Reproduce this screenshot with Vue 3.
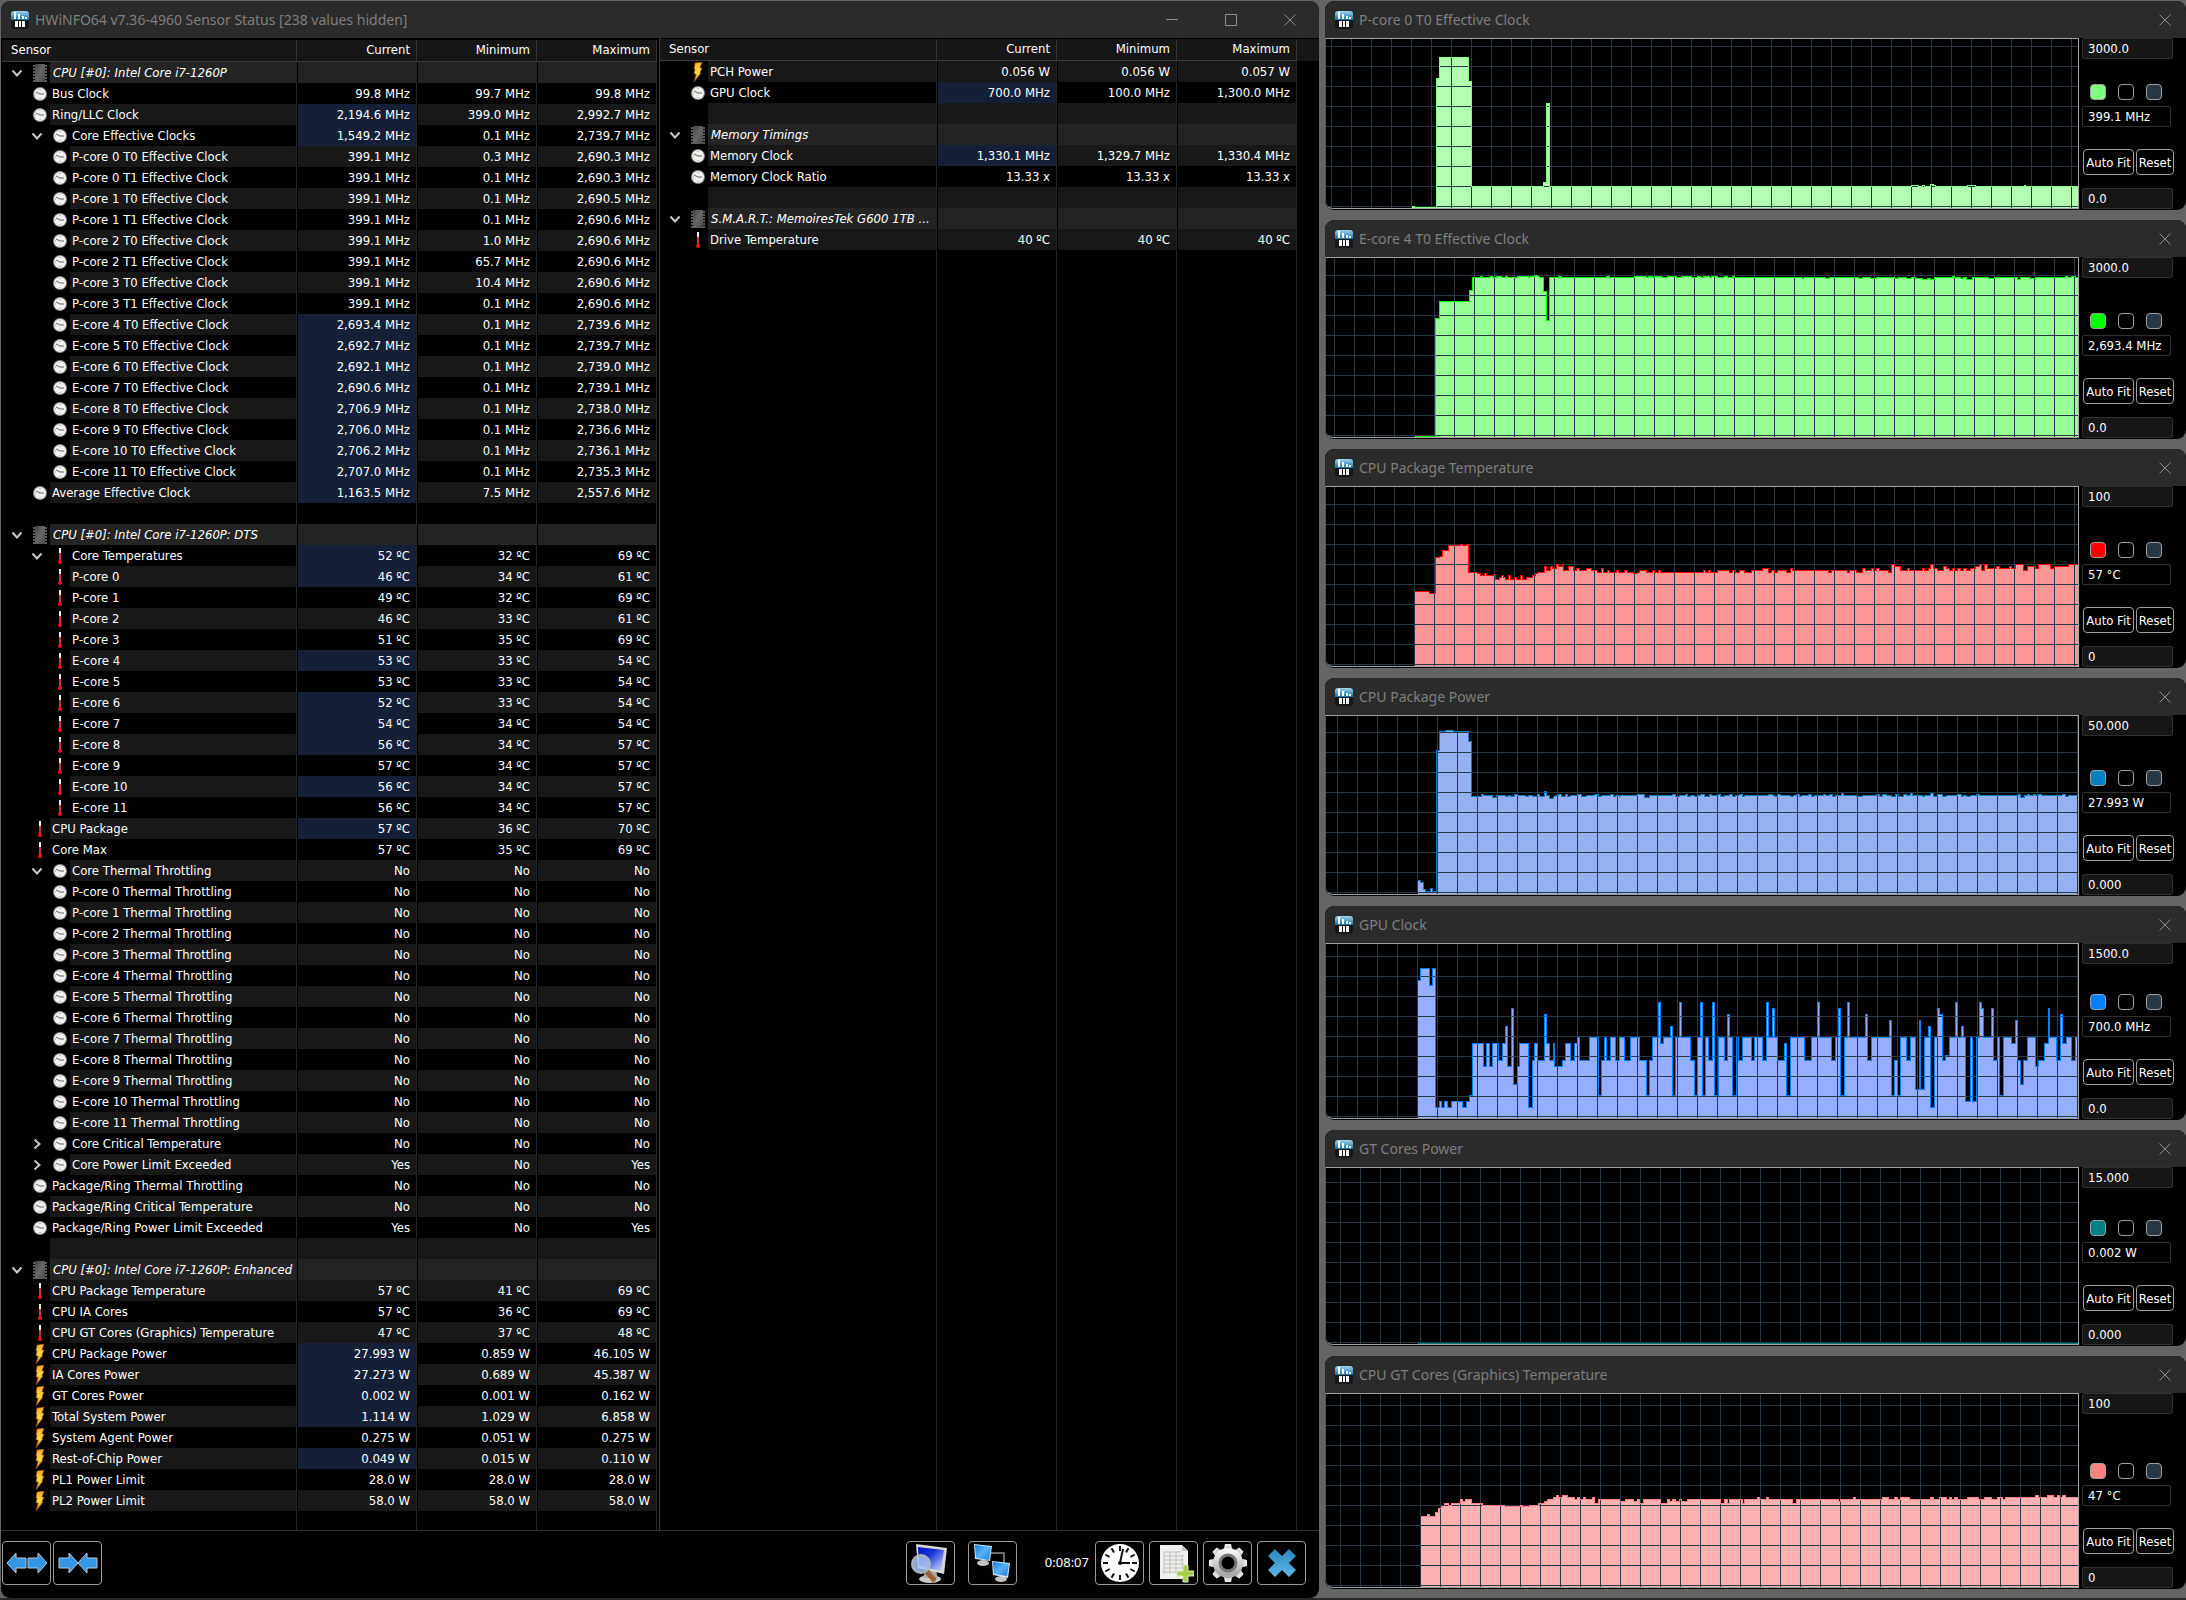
<script setup>
import { ref } from 'vue'

const clock = (depth, label, cur, min, max, hot = 0, toggle = '') => ({ kind: 'clock', depth, label, cells: [cur, min, max], hot, toggle })
const temp = (depth, label, cur, min, max, hot = 0, toggle = '') => ({ kind: 'temp', depth, label, cells: [cur + ' ºC', min + ' ºC', max + ' ºC'], hot, toggle })
const power = (label, cur, min, max, hot = 0) => ({ kind: 'power', depth: 1, label, cells: [cur + ' W', min + ' W', max + ' W'], hot, toggle: '' })
const group = (label) => ({ kind: 'chip', depth: 1, label, cells: ['', '', ''], hot: 0, toggle: 'open', group: true })
const blank = () => ({ kind: '', depth: 1, label: '', cells: ['', '', ''], hot: 0, toggle: '' })
const mhz = (label, cur, min, max, hot) => clock(2, label + ' Effective Clock', cur + ' MHz', min + ' MHz', max + ' MHz', hot)
const cores = ['P-core 0', 'P-core 1', 'P-core 2', 'P-core 3', 'E-core 4', 'E-core 5', 'E-core 6', 'E-core 7', 'E-core 8', 'E-core 9', 'E-core 10', 'E-core 11']

const leftRows = [
  group('CPU [#0]: Intel Core i7-1260P'),
  clock(1, 'Bus Clock', '99.8 MHz', '99.7 MHz', '99.8 MHz'),
  clock(1, 'Ring/LLC Clock', '2,194.6 MHz', '399.0 MHz', '2,992.7 MHz', 1),
  clock(2, 'Core Effective Clocks', '1,549.2 MHz', '0.1 MHz', '2,739.7 MHz', 1, 'open'),
  mhz('P-core 0 T0', '399.1', '0.3', '2,690.3'),
  mhz('P-core 0 T1', '399.1', '0.1', '2,690.3'),
  mhz('P-core 1 T0', '399.1', '0.1', '2,690.5'),
  mhz('P-core 1 T1', '399.1', '0.1', '2,690.6'),
  mhz('P-core 2 T0', '399.1', '1.0', '2,690.6'),
  mhz('P-core 2 T1', '399.1', '65.7', '2,690.6'),
  mhz('P-core 3 T0', '399.1', '10.4', '2,690.6'),
  mhz('P-core 3 T1', '399.1', '0.1', '2,690.6'),
  mhz('E-core 4 T0', '2,693.4', '0.1', '2,739.6', 1),
  mhz('E-core 5 T0', '2,692.7', '0.1', '2,739.7', 1),
  mhz('E-core 6 T0', '2,692.1', '0.1', '2,739.0', 1),
  mhz('E-core 7 T0', '2,690.6', '0.1', '2,739.1', 1),
  mhz('E-core 8 T0', '2,706.9', '0.1', '2,738.0', 1),
  mhz('E-core 9 T0', '2,706.0', '0.1', '2,736.6', 1),
  mhz('E-core 10 T0', '2,706.2', '0.1', '2,736.1', 1),
  mhz('E-core 11 T0', '2,707.0', '0.1', '2,735.3', 1),
  clock(1, 'Average Effective Clock', '1,163.5 MHz', '7.5 MHz', '2,557.6 MHz', 1),
  blank(),
  group('CPU [#0]: Intel Core i7-1260P: DTS'),
  temp(2, 'Core Temperatures', 52, 32, 69, 1, 'open'),
  temp(2, 'P-core 0', 46, 34, 61, 1),
  temp(2, 'P-core 1', 49, 32, 69),
  temp(2, 'P-core 2', 46, 33, 61),
  temp(2, 'P-core 3', 51, 35, 69),
  temp(2, 'E-core 4', 53, 33, 54, 1),
  temp(2, 'E-core 5', 53, 33, 54),
  temp(2, 'E-core 6', 52, 33, 54, 1),
  temp(2, 'E-core 7', 54, 34, 54, 1),
  temp(2, 'E-core 8', 56, 34, 57, 1),
  temp(2, 'E-core 9', 57, 34, 57),
  temp(2, 'E-core 10', 56, 34, 57, 1),
  temp(2, 'E-core 11', 56, 34, 57),
  temp(1, 'CPU Package', 57, 36, 70, 1),
  temp(1, 'Core Max', 57, 35, 69),
  clock(2, 'Core Thermal Throttling', 'No', 'No', 'No', 0, 'open'),
  ...cores.map(c => clock(2, c + ' Thermal Throttling', 'No', 'No', 'No')),
  clock(2, 'Core Critical Temperature', 'No', 'No', 'No', 0, 'closed'),
  clock(2, 'Core Power Limit Exceeded', 'Yes', 'No', 'Yes', 0, 'closed'),
  clock(1, 'Package/Ring Thermal Throttling', 'No', 'No', 'No'),
  clock(1, 'Package/Ring Critical Temperature', 'No', 'No', 'No'),
  clock(1, 'Package/Ring Power Limit Exceeded', 'Yes', 'No', 'Yes'),
  blank(),
  group('CPU [#0]: Intel Core i7-1260P: Enhanced'),
  temp(1, 'CPU Package Temperature', 57, 41, 69),
  temp(1, 'CPU IA Cores', 57, 36, 69),
  temp(1, 'CPU GT Cores (Graphics) Temperature', 47, 37, 48),
  power('CPU Package Power', '27.993', '0.859', '46.105', 1),
  power('IA Cores Power', '27.273', '0.689', '45.387', 1),
  power('GT Cores Power', '0.002', '0.001', '0.162', 1),
  power('Total System Power', '1.114', '1.029', '6.858', 1),
  power('System Agent Power', '0.275', '0.051', '0.275'),
  power('Rest-of-Chip Power', '0.049', '0.015', '0.110', 1),
  power('PL1 Power Limit', '28.0', '28.0', '28.0'),
  power('PL2 Power Limit', '58.0', '58.0', '58.0')
]
const rightRows = [
  power('PCH Power', '0.056', '0.056', '0.057'),
  clock(1, 'GPU Clock', '700.0 MHz', '100.0 MHz', '1,300.0 MHz', 1),
  blank(),
  group('Memory Timings'),
  clock(1, 'Memory Clock', '1,330.1 MHz', '1,329.7 MHz', '1,330.4 MHz', 1),
  clock(1, 'Memory Clock Ratio', '13.33 x', '13.33 x', '13.33 x'),
  blank(),
  group('S.M.A.R.T.: MemoiresTek G600 1TB ...'),
  temp(1, 'Drive Temperature', 40, 40, 40)
]
const tables = [
  { side: 'left', rows: leftRows },
  { side: 'right', rows: rightRows }
]

/* Alternates a trace between two levels at the given positions */
const flip = (a, b, xs) => xs.map((x, i) => x + ' ' + (i % 2 ? a : b)).join(' ')

/* Traces: "position level" pairs on a fine raster, 1.79 steps per column and 3 per line */
const charts = [
  {
    title: 'P-core 0 T0 Effective Clock', top: 114, h: 169, phase: 5, max: '3000.0', value: '399.1 MHz', min: '0.0', line: '#80ff80', fill: '#b2ffb2',
    trace: '183 619 187 622 227 235 232 172 284 243 290 559 419 546 424 310 430 559 1078 556 1090 559 1096 556 1100 559 1112 552 1116 556 1121 559 1177 556 1192 559 1279 556 1282 559'
  },
  {
    title: 'E-core 4 T0 Effective Clock', top: 111, h: 179, phase: 8, max: '3000.0', value: '2,693.4 MHz', min: '0.0', line: '#00ff00', fill: '#96ff96',
    trace: '187 650 226 295 232 244 286 211 292 170 ' + flip(170, 167, [305, 310, 323, 328, 334, 343, 350, 354, 371, 391, 396, 402]) + ' 403 164 407 167 412 170 418 212 423 300 430 171 446 167 450 172 '
      + flip(172, 170, [462, 470, 474, 488, 495, 509, 516, 522]) + ' 532 167 537 172 543 170 ' + flip(170, 167, [581, 602, 607, 613, 618, 629, 640, 656, 666, 683, 694, 699, 704, 715, 720, 730, 742, 747, 756, 761])
      + ' ' + flip(170, 172, [774, 779, 790, 801, 806, 817, 828, 838, 843, 853, 865, 870]) + ' 881 175 886 171 ' + flip(172, 170, [892, 903, 914, 920]) + ' 924 175 930 170 ' + flip(170, 172, [941, 951, 957, 968])
      + ' 982 175 990 170 1003 173 1015 170 1026 172 1042 170 1047 174 1053 170 1069 175 1077 171 1084 173 1096 176 1106 174 1112 177 1119 170 1128 172 1134 170 1150 167 1154 171 1165 174 1170 170 1175 177 1187 172 1193 170 1215 173 1225 170 1235 172 1241 170 1252 172 1267 177 1273 172 1284 170 1288 173 1300 170 1305 172 1311 170 1352 167 1356 170 1363 167 1370 171'
  },
  {
    title: 'CPU Package Temperature', top: 108, h: 179, phase: 8, max: '100', value: '57 °C', min: '0', line: '#ff0000', fill: '#ff9696',
    trace: '187 424 214 430 226 322 232 319 237 301 248 286 269 281 273 286 280 281 284 367 300 370 305 376 312 370 317 376 329 373 332 388 339 382 343 376 346 382 350 388 356 376 360 388 366 382 370 388 377 376 381 388 388 382 398 376 405 370 408 367 420 349 424 361 431 349 434 355 441 343 445 349 452 343 455 361 463 349 472 361 478 355 483 361 495 355 504 361 515 367 522 355 526 367 533 361 537 367 549 361 552 367 564 361 568 367 580 370 586 367 591 361 602 367 613 361 617 367 624 361 628 367 704 361 708 367 714 361 718 367 729 361 751 367 757 361 763 367 769 361 779 367 790 361 811 355 821 367 826 361 832 367 838 361 853 367 860 355 864 361 929 367 934 361 962 367 967 361 978 367 989 355 994 361 1005 355 1009 361 1015 355 1019 361 1036 367 1042 343 1047 349 1057 361 1070 355 1074 361 1096 355 1101 361 1107 355 1112 343 1117 355 1123 361 1134 349 1139 355 1145 361 1150 355 1154 361 1160 355 1165 361 1171 355 1176 361 1182 355 1192 349 1198 343 1202 361 1208 343 1213 355 1230 349 1234 355 1252 349 1257 355 1263 343 1277 361 1284 349 1299 355 1305 343 1326 355 1333 349 1359 343'
  },
  {
    title: 'CPU Package Power', top: 120, h: 178, phase: 11, max: '50.000', value: '27.993 W', min: '0.000', line: '#0080c0', fill: '#96b0f2',
    trace: '192 616 198 622 204 643 208 649 216 640 220 649 227 226 232 169 243 166 257 169 284 199 289 364 307 358 311 361 327 367 334 361 350 364 355 361 360 364 366 358 371 361 387 364 392 361 398 364 408 358 412 364 420 349 423 361 429 370 436 364 440 361 446 358 450 364 457 358 462 364 467 361 480 358 486 364 495 361 510 358 516 364 522 361 538 358 543 364 548 361 554 364 557 361 587 358 600 367 608 361 650 358 655 364 662 361 672 358 677 364 682 361 688 364 694 361 699 358 706 364 715 358 720 361 731 358 736 364 742 361 752 358 757 364 763 361 769 358 774 364 779 361 822 358 828 361 832 364 838 358 843 361 860 364 866 361 871 358 876 364 881 361 892 358 898 364 903 361 919 358 924 361 930 358 935 364 941 361 951 355 955 361 978 364 990 361 1015 358 1020 364 1026 358 1032 361 1042 364 1048 358 1053 364 1063 358 1069 361 1075 355 1079 361 1096 364 1101 361 1112 355 1117 364 1123 358 1133 364 1139 361 1160 358 1166 364 1171 361 1176 364 1182 361 1193 358 1198 361 1268 358 1272 367 1279 361 1284 358 1289 361 1295 358 1300 361 1305 358 1309 361 1348 358 1352 364 1359 361'
  },
  {
    title: 'GPU Clock', top: 129, h: 174, phase: 11, max: '1500.0', value: '700.0 MHz', min: '0.0', line: '#0080ff', fill: '#96aeff',
    trace: '192 239 199 205 214 256 220 205 225 622 232 604 236 622 242 604 247 622 253 604 273 622 280 604 286 586 291 430 311 499 317 430 322 499 328 430 338 481 345 430 350 379 354 499 361 325 364 553 371 499 376 430 392 622 398 481 403 430 408 481 420 343 423 430 430 481 436 430 439 499 452 481 457 430 467 481 474 430 479 412 482 481 500 412 516 586 522 481 527 412 532 481 538 412 548 481 554 412 564 481 575 412 590 481 602 586 608 481 613 412 624 307 628 430 634 412 645 379 649 586 655 412 661 307 665 412 682 481 688 586 694 412 699 307 703 586 709 412 713 481 721 307 725 586 731 412 742 481 747 343 751 412 757 586 764 412 768 481 774 412 790 481 796 412 811 481 817 307 821 412 828 325 832 412 838 481 849 430 853 586 860 412 885 481 898 412 909 307 912 412 934 481 941 412 946 325 950 586 957 412 962 307 966 412 995 343 998 481 1005 412 1037 361 1041 586 1047 481 1052 586 1058 412 1069 481 1075 412 1085 568 1091 361 1094 568 1101 412 1107 379 1111 622 1118 412 1123 325 1127 343 1132 481 1138 466 1145 412 1156 307 1160 412 1167 379 1170 412 1174 604 1182 412 1187 604 1193 412 1198 307 1202 325 1206 412 1220 325 1224 481 1231 412 1235 586 1241 412 1257 430 1263 361 1267 481 1273 553 1278 481 1284 412 1299 499 1305 481 1316 430 1322 325 1325 412 1336 481 1343 343 1347 430 1354 412 1363 481 1370 412'
  },
  {
    title: 'GT Cores Power', top: 129, h: 176, phase: 14, max: '15.000', value: '0.002 W', min: '0.000', line: '#008080', fill: '#008080',
    trace: '192 657'
  },
  {
    title: 'CPU GT Cores (Graphics) Temperature', top: 129, h: 193, phase: 14, max: '100', value: '47 °C', min: '0', line: '#ff8080', fill: '#ffb0b0',
    trace: '199 499 210 493 214 499 226 487 231 475 236 469 242 460 248 466 253 460 269 448 274 454 279 448 289 460 310 466 348 469 377 466 381 469 393 466 409 460 420 454 425 448 436 442 441 436 446 442 452 436 462 442 474 448 479 442 483 448 490 442 494 448 506 442 510 460 516 448 554 454 565 448 580 454 586 448 591 460 597 448 628 460 640 448 644 454 650 448 655 454 661 448 665 454 677 448 736 460 742 448 747 460 752 448 774 460 779 448 801 442 805 448 817 442 821 448 865 460 871 448 946 454 950 448 973 442 977 448 1026 442 1036 448 1047 442 1052 448 1058 442 1073 448 1112 442 1117 448 1128 442 1139 448 1145 442 1149 448 1155 442 1160 448 1177 442 1197 448 1208 442 1220 448 1231 442 1240 448 1246 442 1300 436 1304 442 1321 436 1332 442 1338 436 1342 442 1348 436 1352 442'
  }
].map(c => {
  const n = c.trace.split(' ').map(Number)
  const px = x => Math.round((x - 30) / 1.79) + 0.5
  const py = y => Math.min(c.h - 1, Math.round((y - c.top) / 3) - 1) + 0.5
  let d = ''
  for (let i = 0; i < n.length; i += 2) d += i ? `H${px(n[i])}V${py(n[i + 1])}` : `M${px(n[0])} ${py(n[1])}`
  d += 'H752'
  const start = px(n[0])
  let grid = ''
  for (let x = c.phase; x < 752; x += 20) grid += `M${x + 0.5} 0V${c.h}`
  for (let y = c.h - 1; y > 0; y -= 20) grid += `M0 ${y - 0.5}H752`
  return { ...c, d, area: `${d}V${c.h}H${start}Z`, grid }
})

const seconds = ref(487)
const elapsed = () => {
  const s = seconds.value
  return `${Math.floor(s / 3600)}:${String(Math.floor(s / 60) % 60).padStart(2, '0')}:${String(s % 60).padStart(2, '0')}`
}
const ticks = Array.from({ length: 12 }, (_, i) => i * 30)
const teeth = Array.from({ length: 8 }, (_, i) => i * 45)
</script>

<template>
  <svg class="defs" aria-hidden="true">
    <defs>
      <linearGradient id="gBlue" x1="0" y1="0" x2="0" y2="1"><stop offset="0" stop-color="#9fd4f0" /><stop offset="1" stop-color="#1470a8" /></linearGradient>
      <linearGradient id="gScreen" x1="0" y1="0" x2="1" y2="1"><stop offset="0" stop-color="#0010c8" /><stop offset=".4" stop-color="#1a35d8" /><stop offset="1" stop-color="#d8e4ff" /></linearGradient>
      <linearGradient id="gMon" x1="0" y1="0" x2="1" y2="1"><stop offset="0" stop-color="#1478dc" /><stop offset=".5" stop-color="#58b4f8" /><stop offset="1" stop-color="#1878d8" /></linearGradient>
      <linearGradient id="gMetal" x1="0" y1="0" x2="0" y2="1"><stop offset="0" stop-color="#f4f4f4" /><stop offset="1" stop-color="#a8a8a8" /></linearGradient>
      <linearGradient id="gBolt" x1="0" y1="0" x2="0" y2="1"><stop offset="0" stop-color="#ffa62a" /><stop offset=".5" stop-color="#ffd84a" /><stop offset="1" stop-color="#d08000" /></linearGradient>
      <linearGradient id="gCross" x1="0" y1="0" x2="0" y2="1"><stop offset="0" stop-color="#2f86be" /><stop offset="1" stop-color="#5fb6e6" /></linearGradient>
      <linearGradient id="gChip" x1="0" y1="0" x2="1" y2="1"><stop offset="0" stop-color="#444" /><stop offset=".5" stop-color="#666" /><stop offset="1" stop-color="#484848" /></linearGradient>
    </defs>
    <symbol id="icon-logo" viewBox="0 0 18 18">
      <rect width="18" height="18" rx="3" fill="#15181b" /><path d="M0 3a3 3 0 0 1 3-3h12a3 3 0 0 1 3 3v6H0z" fill="url(#gBlue)" />
      <path d="M3 1h2v7H3zM7 3h2v5H7zM11 5h2v3h-2zM14 6h2v2h-2z" fill="#fff" /><path d="M4 10h3v6H4zM8 10h2v6H8zM11 10h3v6h-3z" fill="#f4f4f4" />
    </symbol>
    <symbol id="icon-clock" viewBox="0 0 16 16">
      <circle cx="8" cy="8" r="7" fill="#8c8c8c" /><circle cx="8" cy="8" r="6" fill="#f1f1f0" /><path d="M4 6l4 2h4" fill="none" stroke="#706258" stroke-width="1" /><path d="M8 3v1M8 12v1M3 8h1" stroke="#999" />
    </symbol>
    <symbol id="icon-temp" viewBox="0 0 16 16">
      <path d="M7 0a1 1 0 0 1 2 0v5H7z" fill="#eee" /><path d="M7 5h2v8H7z" fill="#c83838" /><circle cx="8" cy="14" r="2" fill="#f01410" />
    </symbol>
    <symbol id="icon-power" viewBox="0 0 16 20">
      <path d="M5 1l7-1-2 6h2L10 11h1L4 20l2-8H4l1-5H4z" fill="url(#gBolt)" stroke="#8a4a08" stroke-width=".6" />
    </symbol>
    <symbol id="icon-chip" viewBox="0 0 16 18">
      <path d="M1 2h14M1 5h14M1 8h14M1 11h14M1 14h14M1 17h14" stroke="#777" stroke-width="1.5" /><rect x="3" y="0" width="10" height="18" rx="1" fill="url(#gChip)" />
    </symbol>
    <symbol id="icon-open" viewBox="0 0 12 12"><path d="M1.500 3.500L6 8.500l4.500-5" fill="none" stroke="#c8c8c8" stroke-width="2" /></symbol>
    <symbol id="icon-closed" viewBox="0 0 12 12"><path d="M3.500 1.500l5 4.500-5 4.500" fill="none" stroke="#c8c8c8" stroke-width="2" /></symbol>
    <symbol id="icon-close" viewBox="0 0 12 12"><path d="M.5.5l11 11M11.5.5l-11 11" stroke="#8e8e8e" /></symbol>
  </svg>

  <div class="desktop">
    <main class="window sensors">
      <header class="titlebar">
        <svg class="logo"><use href="#icon-logo" /></svg>
        <h1>HWiNFO64 v7.36-4960 Sensor Status [238 values hidden]</h1>
        <button class="caption" aria-label="Minimize"><svg viewBox="0 0 12 12"><path d="M0 5.500h12" stroke="#8e8e8e" /></svg></button>
        <button class="caption" aria-label="Maximize"><svg viewBox="0 0 12 12"><path d="M.5.5h11v11H.5z" fill="none" stroke="#8e8e8e" /></svg></button>
        <button class="caption" aria-label="Close"><svg><use href="#icon-close" /></svg></button>
      </header>
      <div class="lists">
        <table v-for="t in tables" :key="t.side" :class="t.side">
          <colgroup><col /><col class="num" /><col class="num" /><col class="num" /><col class="rest" /></colgroup>
          <thead>
            <tr><th scope="col" class="first">Sensor</th><th scope="col">Current</th><th scope="col">Minimum</th><th scope="col">Maximum</th><td class="rest"></td></tr>
          </thead>
          <tbody>
            <tr v-for="(r, i) in t.rows" :key="i" :class="{ stripe: i % 2 === 0, group: r.group }">
              <th scope="row" class="name">
                <div class="cell" :class="'depth' + r.depth">
                  <button v-if="r.toggle" class="toggle" :aria-label="r.toggle === 'open' ? 'Collapse' : 'Expand'"><svg><use :href="'#icon-' + r.toggle" /></svg></button>
                  <svg v-if="r.kind" class="icon" :class="r.kind"><use :href="'#icon-' + r.kind" /></svg>
                  <span class="label">{{ r.label }}</span>
                </div>
              </th>
              <td v-for="(c, j) in r.cells" :key="j" :class="{ hot: r.hot && j === 0 }">{{ c }}</td>
              <td class="rest"></td>
            </tr>
            <tr class="filler"><td></td><td></td><td></td><td></td><td class="rest"></td></tr>
          </tbody>
        </table>
      </div>
      <footer class="toolbar">
        <button aria-label="Expand columns">
          <svg viewBox="0 0 40 22" width="40" height="22" fill="#3596e6" stroke="#b8c8d4"><path d="M0 11L9 1v5h10v10H9v5zM40 11L31 1v5H21v10h10v5z" /></svg>
        </button>
        <button aria-label="Shrink columns">
          <svg viewBox="0 0 40 22" width="40" height="22" fill="#3596e6" stroke="#b8c8d4"><path d="M20 11L11 1v5H1v10h10v5zM20 11L29 1v5h10v10H29v5z" /></svg>
        </button>
        <button class="summary" aria-label="System summary">
          <svg viewBox="0 0 40 40" width="40" height="40">
            <ellipse cx="20" cy="36" rx="11" ry="4" fill="#c8c8c4" /><path d="M15 28h11l2 7H13z" fill="#aaa" />
            <path d="M6 1l31 4-3 26-26-6z" fill="#d8d8d0" /><path d="M8 4l26 3-3 21-22-5z" fill="url(#gScreen)" />
            <path d="M16 28l9 10" stroke="#9a6238" stroke-width="5" /><circle cx="11" cy="21" r="9" fill="#a8c4f0" fill-opacity=".85" stroke="#b0b4b8" stroke-width="2" />
          </svg>
        </button>
        <button class="net" aria-label="Remote monitoring">
          <svg viewBox="0 0 40 40" width="40" height="40">
            <path d="M18 10h14v14" fill="none" stroke="#6c6c6c" stroke-width="2" />
            <ellipse cx="11" cy="20" rx="6" ry="3" fill="#c4c4c4" /><path d="M2 1l18 2-2 15-15-2z" fill="#d0e4f8" /><path d="M3 2l16 2-2 13-13-2z" fill="url(#gMon)" />
            <ellipse cx="29" cy="36" rx="6" ry="3" fill="#c4c4c4" /><path d="M20 18l18 2-2 15-15-3z" fill="#d0e4f8" /><path d="M21 19l16 2-2 12-13-2z" fill="url(#gMon)" />
          </svg>
        </button>
        <output>{{ elapsed() }}</output>
        <button aria-label="Reset timer">
          <svg viewBox="0 0 40 40" width="40" height="40">
            <circle cx="20" cy="20" r="19" fill="#fff" /><path v-for="a in ticks" :key="a" d="M20 3v5" stroke="#111" stroke-width="2" :transform="`rotate(${a} 20 20)`" />
            <path d="M20 20l3-14M20 20h10" stroke="#111" stroke-width="2" /><circle cx="20" cy="20" r="2" fill="#111" />
          </svg>
        </button>
        <button aria-label="Log to file">
          <svg viewBox="0 0 40 40" width="40" height="40">
            <path d="M6 2h22l6 6v28H6z" fill="#f0f0ee" /><path d="M28 2v6h6z" fill="#c4c4c4" /><path d="M10 9h17M10 13h20M10 17h20M10 21h20M10 25h20M10 29h16M10 9v22M16 9v22M22 9v22M28 11v15" stroke="#bdbdbd" fill="none" />
            <path d="M29 22h5v6h6v5h-6v6h-5v-6h-6v-5h6z" fill="#a6d048" stroke="#dcecc0" />
          </svg>
        </button>
        <button aria-label="Configure">
          <svg viewBox="0 0 40 40" width="40" height="40">
            <g fill="url(#gMetal)"><path v-for="a in teeth" :key="a" d="M17 1h6l2 8H15z" :transform="`rotate(${a} 20 20)`" /></g>
            <circle cx="20" cy="20" r="11" fill="none" stroke="url(#gMetal)" stroke-width="8" /><circle cx="20" cy="20" r="8" fill="none" stroke="#777" stroke-width="3" />
          </svg>
        </button>
        <button aria-label="Close sensors">
          <svg viewBox="0 0 40 40" width="40" height="40"><path d="M13 6l7 7 7-7 7 7-7 7 7 7-7 7-7-7-7 7-7-7 7-7-7-7z" fill="url(#gCross)" /></svg>
        </button>
      </footer>
    </main>

    <aside class="graphs">
      <section v-for="c in charts" :key="c.title" class="window graph">
        <header class="titlebar">
          <svg class="logo"><use href="#icon-logo" /></svg>
          <h2>{{ c.title }}</h2>
          <button class="caption" aria-label="Close"><svg><use href="#icon-close" /></svg></button>
        </header>
        <div class="body">
          <svg class="plot" :viewBox="`0 0 752 ${c.h}`" preserveAspectRatio="none" role="img" :aria-label="c.title">
            <path :d="c.area" :fill="c.fill" />
            <path :d="c.grid" fill="none" stroke="#263846" />
            <path :d="c.d" fill="none" :stroke="c.line" />
          </svg>
          <div class="side">
            <input class="limit" type="text" :value="c.max" aria-label="Upper limit" />
            <div class="swatches">
              <button aria-label="Line colour" :style="{ background: c.line }"></button>
              <button class="back" aria-label="Background colour"></button>
              <button class="lines" aria-label="Grid colour"></button>
            </div>
            <input class="value" type="text" readonly :value="c.value" aria-label="Current value" />
            <div class="actions"><button class="fit">Auto Fit</button><button class="reset">Reset</button></div>
            <input class="limit" type="text" :value="c.min" aria-label="Lower limit" />
          </div>
        </div>
      </section>
    </aside>
  </div>
</template>

<style>
body { margin: 0; background: #2a2a2a; }
</style>

<style scoped>
* { box-sizing: border-box; }
button { padding: 0; border: 0; background: none; color: inherit; font: inherit; }
.defs { position: absolute; width: 0; height: 0; }
.desktop {
  display: grid;
  grid-template-columns: 1318fr 861fr;
  gap: 6px;
  min-height: calc(100vh - 2px);
  padding: 1px 0 0 1px;
  background: #646464;
  color: #fff;
  font: 13px/21px "DejaVu Sans Condensed", "Noto Sans", sans-serif;
}
.window { display: flex; flex-direction: column; overflow: hidden; border-radius: 9px; background: #000; }
.titlebar { display: flex; flex: none; align-items: center; height: 37px; padding-left: 10px; background: #2b2b2b; color: #7e7e7e; }
.titlebar h1, .titlebar h2 { flex: 1; margin: 0; font: 14px/20px "Noto Sans", sans-serif; white-space: nowrap; }
.logo { width: 18px; height: 18px; margin-right: 6px; }
.caption { display: grid; place-items: center; width: 59px; height: 37px; }
.graph .caption { width: 42px; }
.caption svg { width: 12px; height: 12px; }

.lists { display: grid; flex: 1; grid-template-columns: 1fr 1fr; border-bottom: 1px solid #333; }
table { width: 100%; height: 100%; table-layout: fixed; border-spacing: 0; }
.left { padding: 2px 0 0 1px; border-right: 1px solid #3a3a3a; }
.right { padding-top: 1px; }
col.num { width: 120px; }
.left col.rest { width: 2px; }
.right col.rest { width: 22px; }
th, td { height: 21px; padding: 0 6px 0 0; border-right: 1px solid #20262e; border-left: 1px solid #000; font-weight: 400; text-align: right; white-space: nowrap; }
thead th { height: 22px; padding-bottom: 2px; border-right-color: #333; border-bottom: 1px solid #3a3a3a; border-left: 0; background: #161616; line-height: 17px; }
thead .first { padding-left: 9px; text-align: left; }
td.rest { padding: 0; border: 0; }
.right thead .rest { background: #161616; }
.name { padding: 0; border-left: 0; text-align: left; }
.cell { display: flex; align-items: center; justify-content: flex-end; height: 21px; }
.label { flex: none; height: 21px; padding-left: 2px; overflow: hidden; }
.depth1 .label { width: calc(100% - 48px); }
.depth2 .label { width: calc(100% - 68px); }
.stripe .label, .stripe td:not(.rest) { background: #181818; }
.group .label, .group td:not(.rest) { background: #242424; }
.group .label { padding-left: 3px; font-style: italic; }
.stripe .hot:not(.rest), .hot { background: #152036; }
.toggle { display: grid; place-items: center; width: 12px; height: 20px; margin-right: 9px; }
.toggle svg { width: 12px; height: 12px; }
.icon { flex: none; width: 16px; height: 16px; margin-right: 2px; }
.icon.power { height: 20px; }
.icon.chip { height: 18px; }
.filler td { height: auto; }

.toolbar { display: flex; flex: none; align-items: center; gap: 5px; height: 67px; padding: 0 13px 4px 1px; }
.toolbar button { display: grid; place-items: center; flex: none; width: 49px; height: 44px; border: 1px solid #9a9a9a; border-radius: 4px; }
.toolbar button + button:nth-child(2) { margin-left: -3px; }
.toolbar button.summary { margin: 0 8px 0 auto; }
.toolbar output { margin: 0 1px 0 23px; font: 13px/21px "Noto Sans", sans-serif; }

.graphs { display: grid; grid-template-rows: 209fr 219fr 219fr 218fr 214fr 216fr 233fr; gap: 10px; margin-bottom: 9px; }
.body { display: flex; flex: 1; gap: 3px; min-height: 0; padding-bottom: 1px; }
.plot { flex: 1; min-width: 0; height: 100%; border: 1px solid #a0a0a0; border-left-color: #555; border-bottom-left-radius: 8px; background: #000; shape-rendering: crispEdges; }
.side { display: flex; flex: none; flex-direction: column; width: 104px; }
input { width: 91px; height: 21px; padding: 0 5px; border: 1px solid #303030; border-radius: 2px; background: #161616; color: #fff; font: inherit; }
.value { width: 89px; margin: 6px 0 22px; background: #000; }
.swatches { display: flex; gap: 12px; margin-top: auto; padding-left: 8px; }
.swatches button { width: 16px; height: 16px; border: 1px solid #a0a0a0; border-radius: 4px; }
.swatches .back { background: #000; }
.swatches .lines { background: #263846; }
.actions { display: flex; gap: 2px; margin-bottom: 13px; padding-left: 1px; }
.actions button { height: 26px; border: 1px solid #a0a0a0; border-radius: 4px; white-space: nowrap; }
.actions .fit { width: 51px; }
.actions .reset { width: 38px; }
</style>
